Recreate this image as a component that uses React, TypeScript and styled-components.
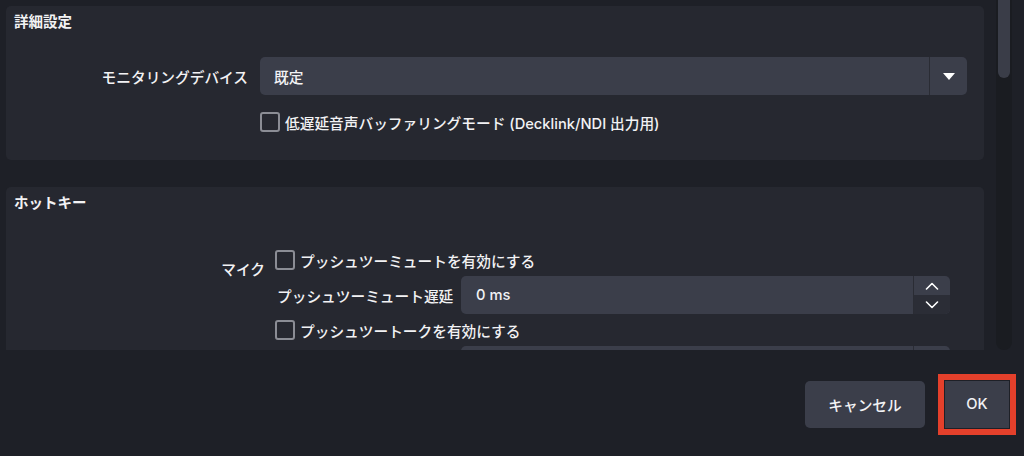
import styled, { createGlobalStyle } from "styled-components";

const GlobalStyle = createGlobalStyle`
	html, body {
		margin: 0;
		padding: 0;
		background: #1e2027;
	}
	body {
		font-family: "Inter", "Noto Sans CJK JP", sans-serif;
		color: #f2f2f4;
		-webkit-font-smoothing: antialiased;
	}
	* {
		box-sizing: border-box;
	}
`;

const Window = styled.div`
	width: 1024px;
	height: 456px;
	display: flex;
	flex-direction: column;
	background: #1e2027;
	overflow: hidden;
`;

const ScrollArea = styled.div`
	height: 350px;
	display: flex;
`;

const Content = styled.div`
	flex: 1;
	padding: 6px 0 0 6px;
	display: flex;
	flex-direction: column;
	gap: 27px;
	overflow: hidden;
`;

const ScrollTrack = styled.div`
	width: 16px;
	margin: 0 12px 0 12px;
	background: #1a1c21;
	border-radius: 0 0 8px 8px;
	padding: 0 2px;
`;

const ScrollThumb = styled.div`
	height: 78px;
	background: #3a3d48;
	border-radius: 0 0 6px 6px;
`;

const Group = styled.section`
	background: #262830;
	border-radius: 5px;
	padding: 8px 17px 27px 8px;
	flex-shrink: 0;
`;

const GroupTitle = styled.h2<{ $gap: number }>`
	margin: 0 0 ${(p) => p.$gap}px 0;
	font-size: 14.5px;
	line-height: 16px;
	font-weight: 700;
`;

const Form = styled.div<{ $labelWidth: number; $colGap: number }>`
	display: grid;
	grid-template-columns: ${(p) => p.$labelWidth}px 1fr;
	column-gap: ${(p) => p.$colGap}px;
	row-gap: 16px;
	align-items: center;
`;

const Label = styled.div<{ $offset?: number }>`
	text-align: right;
	font-size: 14.7px;
	font-weight: 500;
	white-space: nowrap;
	align-self: ${(p) => (p.$offset ? "start" : "center")};
	padding-top: ${(p) => p.$offset ?? 0}px;
`;

const Select = styled.div`
	height: 38px;
	display: flex;
	background: #3b3e4a;
	border-radius: 5px;
`;

const SelectValue = styled.div`
	flex: 1;
	display: flex;
	align-items: center;
	padding-left: 14px;
	font-size: 14.7px;
	font-weight: 500;
	border-right: 1px solid #2a2c34;
`;

const SelectArrow = styled.div`
	width: 37px;
	display: flex;
	align-items: center;
	justify-content: center;
	&::after {
		content: "";
		border-left: 6px solid transparent;
		border-right: 6px solid transparent;
		border-top: 7px solid #ffffff;
	}
`;

const CheckRow = styled.label`
	height: 22px;
	display: flex;
	align-items: center;
	gap: 5px;
	font-size: 14.7px;
	font-weight: 500;
	white-space: nowrap;
`;

const Box = styled.span`
	width: 20px;
	height: 20px;
	border: 2px solid #8b8d95;
	border-radius: 3px;
	flex-shrink: 0;
`;

const Stack = styled.div`
	display: flex;
	flex-direction: column;
	gap: 5px;
	padding-top: 3px;
`;

const DelayRow = styled.div`
	display: flex;
	align-items: center;
	gap: 8px;
	padding-left: 2px;
`;

const DelayLabel = styled.span`
	width: 176px;
	font-size: 14.7px;
	font-weight: 500;
	white-space: nowrap;
`;

const Spin = styled.div`
	width: 489px;
	height: 38px;
	display: flex;
	background: #3b3e4a;
	border-radius: 5px;
	overflow: hidden;
`;

const SpinValue = styled.div`
	flex: 1;
	display: flex;
	align-items: center;
	padding-left: 15px;
	font-size: 14.7px;
	font-weight: 500;
	border-right: 1px solid #2a2c34;
`;

const SpinButtons = styled.div`
	width: 36px;
	display: flex;
	flex-direction: column;
`;

const SpinHalf = styled.div<{ $dark?: boolean }>`
	flex: 1;
	display: flex;
	align-items: center;
	justify-content: center;
	background: ${(p) => (p.$dark ? "#2b2d36" : "transparent")};
`;

const Footer = styled.footer`
	flex: 1;
	display: flex;
	justify-content: flex-end;
	align-items: center;
	gap: 20px;
	padding: 2px 15px 0 0;
`;

const Button = styled.button<{ $width: number; $highlight?: boolean }>`
	width: ${(p) => p.$width}px;
	height: 47px;
	background: #3b3e4a;
	border: none;
	border-radius: 5px;
	color: #f2f2f4;
	font-family: inherit;
	font-size: 14.7px;
	font-weight: 500;
	outline: ${(p) => (p.$highlight ? "6px solid #e4402b" : "none")};
	outline-offset: 1px;
	${(p) => (p.$highlight ? "border-radius: 0;" : "")}
`;

function Chevron({ up }: { up?: boolean }) {
	return (
		<svg width="14" height="8" viewBox="0 0 14 8">
			<path
				d={up ? "M1.5 7 L7 1.5 L12.5 7" : "M1.5 1 L7 6.5 L12.5 1"}
				fill="none"
				stroke="#ffffff"
				strokeWidth="1.6"
				strokeLinecap="round"
				strokeLinejoin="round"
			/>
		</svg>
	);
}

function SpinBox({ value, hoverDown }: { value?: string; hoverDown?: boolean }) {
	return (
		<Spin>
			<SpinValue>{value}</SpinValue>
			<SpinButtons>
				<SpinHalf>
					<Chevron up />
				</SpinHalf>
				<SpinHalf $dark={hoverDown}>
					<Chevron />
				</SpinHalf>
			</SpinButtons>
		</Spin>
	);
}

export default function App() {
	return (
		<Window>
			<GlobalStyle />
			<ScrollArea>
				<Content>
					<Group>
						<GroupTitle $gap={27}>詳細設定</GroupTitle>
						<Form $labelWidth={234} $colGap={12}>
							<Label>モニタリングデバイス</Label>
							<Select>
								<SelectValue>既定</SelectValue>
								<SelectArrow />
							</Select>
							<div />
							<CheckRow>
								<Box />
								低遅延音声バッファリングモード (Decklink/NDI 出力用)
							</CheckRow>
						</Form>
					</Group>
					<Group>
						<GroupTitle $gap={35}>ホットキー</GroupTitle>
						<Form $labelWidth={251} $colGap={10}>
							<Label $offset={12}>マイク</Label>
							<Stack>
								<CheckRow>
									<Box />
									プッシュツーミュートを有効にする
								</CheckRow>
								<DelayRow>
									<DelayLabel>プッシュツーミュート遅延</DelayLabel>
									<SpinBox value="0 ms" hoverDown />
								</DelayRow>
								<CheckRow>
									<Box />
									プッシュツートークを有効にする
								</CheckRow>
								{/* next row is scrolled out of view; only its field edge shows */}
								<DelayRow>
									<DelayLabel />
									<SpinBox />
								</DelayRow>
							</Stack>
						</Form>
					</Group>
				</Content>
				<ScrollTrack>
					<ScrollThumb />
				</ScrollTrack>
			</ScrollArea>
			<Footer>
				<Button $width={120}>キャンセル</Button>
				<Button $width={64} $highlight>
					OK
				</Button>
			</Footer>
		</Window>
	);
}
